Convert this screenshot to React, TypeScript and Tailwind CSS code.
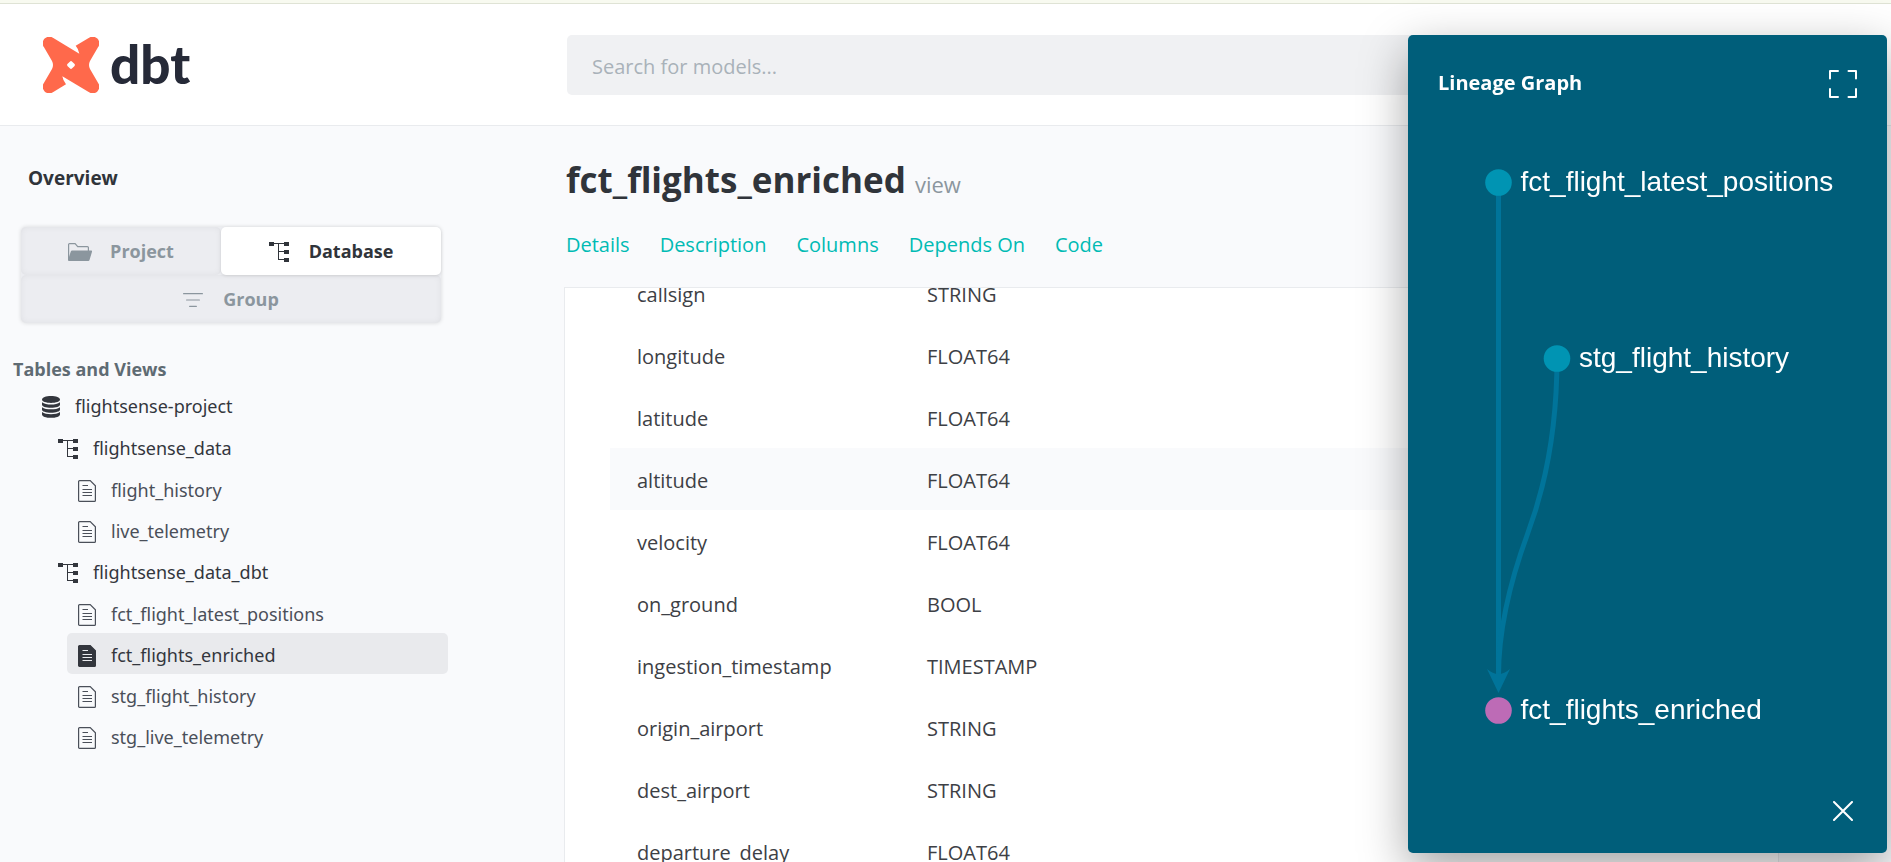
import type { ReactNode } from "react";

function TreeIcon() {
  return (
    <svg viewBox="0 0 20 20" className="h-5 w-5 shrink-0" fill="currentColor" aria-hidden="true" shapeRendering="crispEdges">
      <path d="M0 0h5v4H0zM15 0h5v4h-5zM15 8h5v4h-5zM15 16h5v4h-5z" />
      <path d="M4 1h12v1H4zM9 2h1v16H9zM10 9h6v1h-6zM9 17h7v1H9z" />
    </svg>
  );
}

function DatabaseIcon() {
  return (
    <svg viewBox="0 0 18 22" className="h-[22px] w-[18px] shrink-0" fill="currentColor" aria-hidden="true">
      <path d="M0 3.600C0 1.600 4 0 9 0s9 1.600 9 3.600S14 7 9 7 0 5.600 0 3.600z" />
      <path d="M0 6.200C2 8 5.500 8.500 9 8.500s7-.5 9-2.300v2.600c0 1.700-4 3-9 3s-9-1.300-9-3z" />
      <path d="M0 11.200c2 1.800 5.500 2.100 9 2.100s7-.3 9-2.100v2.500c0 1.600-4 3-9 3s-9-1.400-9-3z" />
      <path d="M0 16.100c2 1.800 5.500 2.100 9 2.100s7-.3 9-2.100v2.300c0 1.900-4 3.400-9 3.400s-9-1.500-9-3.400z" />
    </svg>
  );
}

function FileIcon({ active = false }: { active?: boolean }) {
  return (
    <svg viewBox="0 0 18 22" className="h-[22px] w-[18px] shrink-0" aria-hidden="true">
      <path
        d="M.6 1.600a1 1 0 0 1 1-1h10.600l5.200 5.200v14.600a1 1 0 0 1-1 1H1.600a1 1 0 0 1-1-1z"
        fill={active ? "currentColor" : "none"}
        stroke="currentColor"
        strokeWidth="1.200"
      />
      <path
        d="M4.500 5.500h5.500M4.500 9.500h9.500M4.500 12.500h9.500M4.500 15.500h9.500"
        stroke={active ? "#ebecef" : "currentColor"}
        strokeWidth="1.200"
      />
    </svg>
  );
}

function FolderIcon() {
  return (
    <svg viewBox="0 0 24 18" className="h-[18px] w-6 shrink-0" fill="currentColor" aria-hidden="true">
      <path d="M.6 17V1.500a.9.9 0 0 1 .9-.9h5.600l2.600 3h9.700a1 1 0 0 1 1 1V8" fill="none" stroke="currentColor" strokeWidth="1.200" />
      <path d="M4.200 7.500h18.800a1 1 0 0 1 1 1.300l-2.500 8.200a1.300 1.300 0 0 1-1.200 1H1a1 1 0 0 1-.9-1.300l2.700-8.200a1.400 1.400 0 0 1 1.400-1z" />
    </svg>
  );
}

function FilterIcon() {
  return (
    <svg viewBox="0 0 20 14" className="h-[14px] w-5 shrink-0" stroke="currentColor" strokeWidth="1.200" strokeLinecap="round" aria-hidden="true">
      <path d="M.6 .7h18.800M3.600 7h12.800M6.600 13.300h6.800" />
    </svg>
  );
}

function Logo() {
  return (
    <a href="#!/overview" aria-label="dbt" className="flex items-center gap-[11px] text-[#262a38]">
      <svg viewBox="0 0 168 168" className="h-14 w-14" fill="#ff694b" aria-hidden="true">
        <path
          fillRule="evenodd"
          d="M31 3L109 50Q107 36 98 26L137 3A20 20 0 0 1 165 31L141 72Q135 84 141 96L165 137A20 20 0 0 1 137 165L58 118Q60 131 69 142L31 165A20 20 0 0 1 3 137L27 96Q33 84 27 72L3 31A20 20 0 0 1 31 3ZM80.500 74L74 80.500Q70.500 84 74 87.500L80.500 94Q84 97.500 87.500 94L94 87.500Q97.500 84 94 80.500L87.500 74Q84 70.500 80.500 74Z"
        />
      </svg>
      <span className="pb-0.5 font-[Lato] text-[53px] leading-[60px] font-black">dbt</span>
    </a>
  );
}

function TreeItem({
  icon,
  label,
  pad,
  active = false,
  children,
}: {
  icon: ReactNode;
  label: string;
  pad: string;
  active?: boolean;
  children?: ReactNode;
}) {
  return (
    <li>
      <a
        href={"#!/" + label}
        className={`flex h-[41px] items-center gap-[15px] rounded-[5px] pt-1 ${pad} ${active ? "bg-[#e9eaed]" : ""}`}
      >
        {icon}
        <span>{label}</span>
      </a>
      {children && <ul className="mt-px">{children}</ul>}
    </li>
  );
}

function FileItem({ label, active = false }: { label: string; active?: boolean }) {
  return (
    <div className={active ? "text-[#33363d]" : "text-[#4a4f59]"}>
      <TreeItem icon={<FileIcon active={active} />} label={label} pad="ml-[67px] pl-[11px]" active={active} />
    </div>
  );
}

function Sidebar() {
  return (
    <aside className="w-[564px] shrink-0 pt-9">
      <a href="#!/overview" className="ml-7 block text-[19px] leading-8 font-bold text-[#30343a]">
        Overview
      </a>
      <div className="mt-[33px] ml-[21px] flex w-[420px] flex-wrap rounded-[5px] bg-[#ecedf1] text-[18px] font-bold text-[#8b969e] shadow-[0_0_4px_rgba(0,0,0,0.14)]">
        <button className="flex h-12 w-[200px] items-center justify-center gap-[18px] rounded-[5px] pt-px shadow-[inset_0_0_6px_rgba(0,0,0,0.06)]">
          <FolderIcon />
          Project
        </button>
        <button className="flex h-12 w-[220px] items-center justify-center gap-5 rounded-[5px] bg-white pt-px text-[#30343a] shadow-[0_1px_3px_rgba(0,0,0,0.1)]">
          <TreeIcon />
          Database
        </button>
        <button className="flex h-12 w-full items-center justify-center gap-5 rounded-[5px] pt-px shadow-[inset_0_0_6px_rgba(0,0,0,0.06)]">
          <FilterIcon />
          Group
        </button>
      </div>
      <h2 className="mt-[30px] ml-[13px] text-[18px] leading-8 font-bold text-[#5f6b73]">Tables and Views</h2>
      <ul className="-mt-px w-[448px] font-['Noto_Sans','Open_Sans',sans-serif] text-[18px] text-[#33363d]">
        <TreeItem icon={<DatabaseIcon />} label="flightsense-project" pad="pl-[42px]">
          <TreeItem icon={<TreeIcon />} label="flightsense_data" pad="pl-[58px]">
            <FileItem label="flight_history" />
            <FileItem label="live_telemetry" />
          </TreeItem>
          <TreeItem icon={<TreeIcon />} label="flightsense_data_dbt" pad="pl-[58px]">
            <FileItem label="fct_flight_latest_positions" />
            <FileItem label="fct_flights_enriched" active />
            <FileItem label="stg_flight_history" />
            <FileItem label="stg_live_telemetry" />
          </TreeItem>
        </TreeItem>
      </ul>
    </aside>
  );
}

const columns = [
  ["callsign", "STRING"],
  ["longitude", "FLOAT64"],
  ["latitude", "FLOAT64"],
  ["altitude", "FLOAT64"],
  ["velocity", "FLOAT64"],
  ["on_ground", "BOOL"],
  ["ingestion_timestamp", "TIMESTAMP"],
  ["origin_airport", "STRING"],
  ["dest_airport", "STRING"],
  ["departure_delay", "FLOAT64"],
];

const sections = ["Details", "Description", "Columns", "Depends On", "Code"];

function Model() {
  return (
    <main className="flex min-w-0 flex-1 flex-col">
      <h1 className="mt-[29px] ml-[2px] text-[35px] leading-[50px] font-bold text-[#30343a]">
        fct_flights_enriched <small className="text-[22px] font-normal text-[#8b969e]">view</small>
      </h1>
      <nav className="mt-5 mb-[26px] ml-[2px] flex gap-[30px] text-[20px] leading-8 text-[#00bbb4]">
        {sections.map((name) => (
          <a key={name} href={"#" + name}>
            {name}
          </a>
        ))}
      </nav>
      <div className="mr-[112px] min-h-0 flex-1 overflow-hidden border-x border-t border-[#e9ebee] bg-white pl-[45px]">
        <table className="-mt-[26px] w-full text-left text-[20px] text-[#3d4045]">
          <tbody>
            {columns.map(([name, type]) => (
              <tr key={name} className={name === "altitude" ? "h-[62px] bg-[#f9fafc]" : "h-[62px]"}>
                <td className="w-[290px] pt-[3px] pl-[27px]">{name}</td>
                <td className="pt-[3px] pl-[27px]">{type}</td>
              </tr>
            ))}
          </tbody>
        </table>
      </div>
    </main>
  );
}

const nodes = [
  { label: "fct_flight_latest_positions", x: 90.5, y: 51.5, color: "#0094b3" },
  { label: "stg_flight_history", x: 149, y: 227.5, color: "#0094b3" },
  { label: "fct_flights_enriched", x: 90.5, y: 579.5, color: "#bd6bb6" },
];

function LineagePanel() {
  return (
    <section className="fixed top-[35px] right-1 bottom-[9px] flex w-[479px] flex-col rounded-[5px] bg-[#005e7a] text-white shadow-[0_16px_48px_rgba(0,0,0,0.36)]">
      <div className="flex h-24 items-center justify-between px-[30px]">
        <h2 className="text-[20px] font-bold">Lineage Graph</h2>
        <button aria-label="View fullscreen" className="mt-0.5">
          <svg viewBox="0 0 28 28" className="h-7 w-7" fill="none" stroke="currentColor" strokeWidth="2" strokeLinecap="round" strokeLinejoin="round">
            <path d="M1 8.500V1h8M19.500 1H27v7.500M27 19v8h-7.500M9 27H1v-8" />
          </svg>
        </button>
      </div>
      <svg viewBox="0 0 479 642" className="min-h-0 w-full flex-1">
        <g fill="none" stroke="#00749a" strokeWidth="5">
          <path d="M90.500 51V545" />
          <path d="M149 227Q149 324 119.500 403Q90.500 482 90.500 545" />
        </g>
        <path d="M90.500 562L79 538Q90.500 548 102 538z" fill="#00749a" />
        {nodes.map((node) => (
          <g key={node.label}>
            <circle cx={node.x} cy={node.y} r="13.300" fill={node.color} />
            <text x={node.x + 22} y={node.y + 8} fill="#fff" className="font-['Liberation_Sans',Arial,sans-serif] text-[28px]">
              {node.label}
            </text>
          </g>
        ))}
      </svg>
      <div className="flex h-20 items-center justify-end pr-[34px] pb-1">
        <button aria-label="Close">
          <svg viewBox="0 0 20 20" className="h-5 w-5" fill="none" stroke="currentColor" strokeWidth="2" strokeLinecap="round">
            <path d="M1 1l18 18M19 1L1 19" />
          </svg>
        </button>
      </div>
    </section>
  );
}

export default function App() {
  return (
    <div className="flex h-screen flex-col overflow-hidden bg-[#f9fafc] font-['Open_Sans','Noto_Sans',sans-serif]">
      <div className="h-1 shrink-0 border-b border-[#dfe3d5] bg-[#f8faf0]" />
      <header className="flex h-[122px] shrink-0 items-center border-b border-[#e9ebee] bg-white">
        <div className="w-[567px] shrink-0 pl-[43px]">
          <Logo />
        </div>
        <input
          type="search"
          aria-label="Search for models"
          placeholder="Search for models..."
          className="mr-7 h-[60px] min-w-0 flex-1 rounded-[5px] bg-[#f0f1f3] px-[25px] pt-1 text-[20px] text-[#30343a] placeholder:text-[#a9b2b9]"
        />
      </header>
      <div className="flex min-h-0 flex-1">
        <Sidebar />
        <Model />
      </div>
      <LineagePanel />
    </div>
  );
}
